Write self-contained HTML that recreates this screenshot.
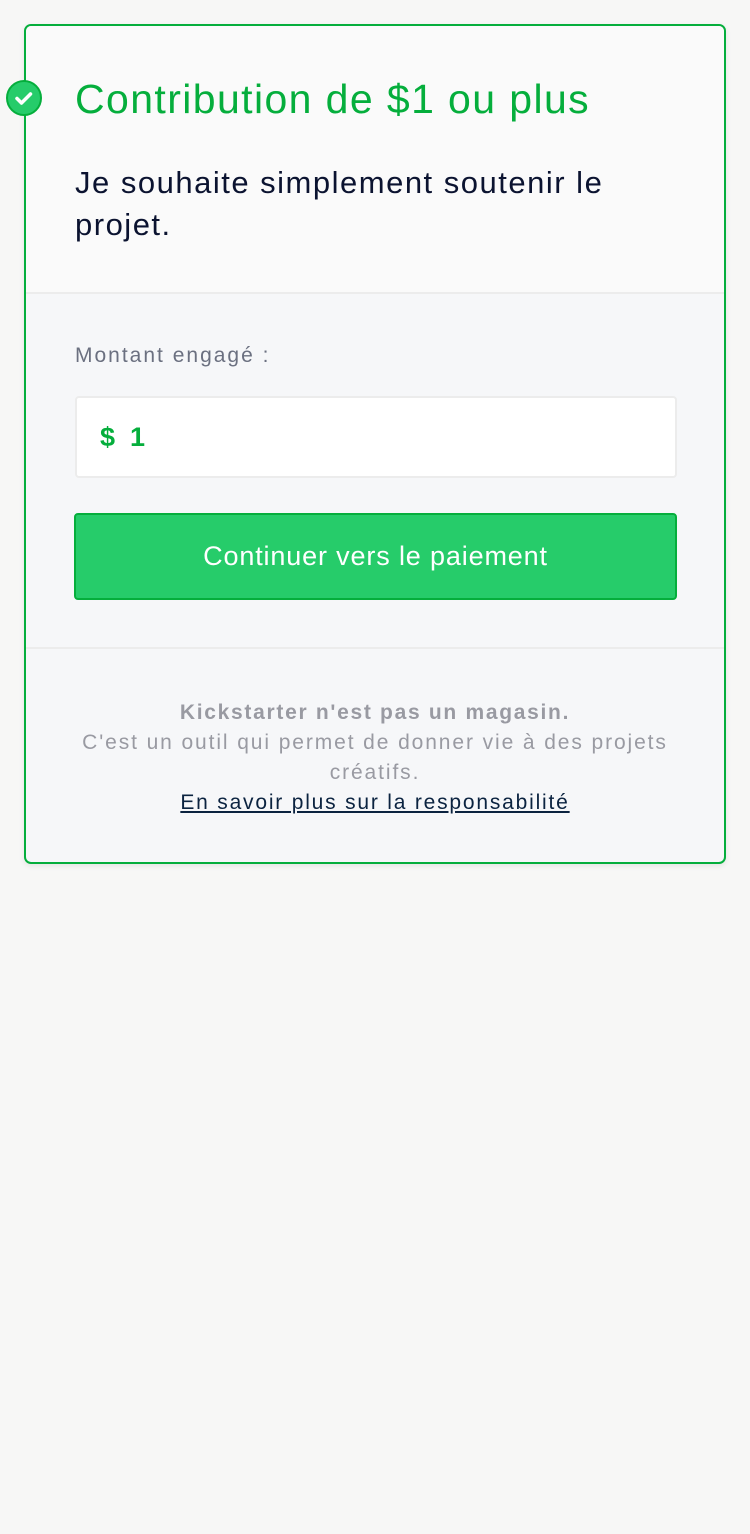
<!DOCTYPE html>
<html><head><meta charset="utf-8"><style>
*{margin:0;padding:0;box-sizing:border-box}
body{width:750px;height:1534px;background:#f7f7f6;font-family:"Liberation Sans",sans-serif;position:relative;overflow:hidden}
.card{position:absolute;left:24px;top:24px;width:702px;height:840px;border:2px solid #05ae3c;border-radius:7px;background:#f6f7f9;overflow:hidden;box-shadow:0 2px 6px rgba(0,0,0,.08)}
.top{position:absolute;left:0;top:0;width:100%;height:268px;background:#fafafa;border-bottom:2px solid #ececec}
.title{position:absolute;left:49px;top:50px;font-size:41px;color:#05ae3c;white-space:nowrap;letter-spacing:1.4px}
.desc{position:absolute;left:49px;top:136px;font-size:31px;line-height:42px;color:#0b1330;width:600px;letter-spacing:1.5px}
.lbl{position:absolute;left:49px;top:318px;font-size:21px;color:#6b7080;letter-spacing:2px}
.inp{position:absolute;left:49px;top:370px;width:602px;height:82px;background:#fff;border:2px solid #ececec;border-radius:4px}
.inp span{position:absolute;left:23px;top:24px;font-size:27px;font-weight:bold;color:#05ae3c}
.btn{position:absolute;left:48px;top:487px;width:603px;height:87px;background:#26cc6a;border:2px solid #05ae3c;border-radius:4px;color:#fff;font-size:27px;text-align:center;line-height:82px;letter-spacing:0.85px}
.sep{position:absolute;left:0;top:621px;width:100%;height:2px;background:#ececec}
.foot{position:absolute;left:0;top:672px;width:100%;text-align:center;font-size:21px;line-height:30px;color:#999aa2;letter-spacing:1.9px}
.foot b{color:#999aa2;letter-spacing:1.7px}
.foot a{color:#0b2340;text-decoration:underline;letter-spacing:1.8px}
.chk{position:absolute;left:6px;top:80px;width:36px;height:36px;border-radius:50%;background:#26cc6a;border:2px solid #05ae3c}
</style></head><body>
<div class="card">
<div class="top"></div>
<div class="title">Contribution de $1 ou plus</div>
<div class="desc">Je souhaite simplement soutenir le projet.</div>
<div class="lbl">Montant engagé :</div>
<div class="inp"><span>$&nbsp;&nbsp;1</span></div>
<div class="btn">Continuer vers le paiement</div>
<div class="sep"></div>
<div class="foot"><b>Kickstarter n'est pas un magasin.</b><br>C'est un outil qui permet de donner vie à des projets<br>créatifs.<br><a>En savoir plus sur la responsabilité</a></div>
</div>
<div class="chk"><svg width="32" height="32" viewBox="0 0 32 32"><path d="M9 16.5l4.5 4.5 9-9" stroke="#fff" stroke-width="3.5" fill="none" stroke-linecap="round" stroke-linejoin="round"/></svg></div>
</body></html>
